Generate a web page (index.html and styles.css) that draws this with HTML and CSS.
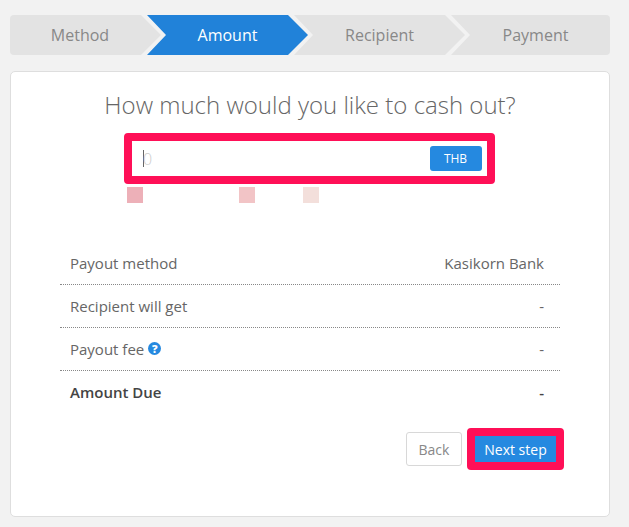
FILE: index.html
```html
<!DOCTYPE html>
<html lang="en">
<head>
<meta charset="utf-8">
<title>Cash out</title>
<link rel="stylesheet" href="styles.css">
</head>
<body>
<nav class="steps">
  <div class="step step-method">Method</div>
  <div class="step step-amount">Amount</div>
  <div class="step step-recipient">Recipient</div>
  <div class="step step-payment">Payment</div>
</nav>
<main class="card">
  <h1 class="title">How much would you like to cash out?</h1>
  <div class="amount-box">
    <span class="caret"></span><span class="placeholder">0</span>
    <span class="currency">THB</span>
  </div>
  <div class="hints">
    <span class="hint hint-a"></span>
    <span class="hint hint-b"></span>
    <span class="hint hint-c"></span>
  </div>
  <div class="rows">
    <div class="row"><span>Payout method</span><span>Kasikorn Bank</span></div>
    <div class="row"><span>Recipient will get</span><span>-</span></div>
    <div class="row"><span class="with-icon">Payout fee <span class="help">?</span></span><span>-</span></div>
    <div class="row row-total"><span>Amount Due</span><span>-</span></div>
  </div>
  <div class="actions">
    <button class="btn-back" type="button">Back</button>
    <span class="next-frame"><button class="btn-next" type="button">Next step</button></span>
  </div>
</main>
</body>
</html>
```
FILE: styles.css
```css
* { box-sizing: border-box; }
html, body { margin: 0; height: 100%; }
body {
  background: #f2f2f2;
  font-family: "Open Sans", sans-serif;
  color: #666;
  padding: 15px 19px 10px 10px;
  width: 629px;
  height: 527px;
  overflow: hidden;
}
.steps {
  display: flex;
  height: 40px;
  border-radius: 4px;
  overflow: hidden;
}
.step {
  display: flex;
  align-items: center;
  justify-content: center;
  flex: none;
  font-size: 16px;
  color: #888;
  background: #e3e3e3;
}
.step-method {
  width: 151px;
  padding-right: 11px;
  clip-path: polygon(0 0, 131px 0, 100% 50%, 131px 100%, 0 100%);
}
.step-amount {
  width: 161px;
  margin-left: -14px;
  color: #fff;
  background: #2182d9;
  clip-path: polygon(0 0, 141px 0, 100% 50%, 141px 100%, 0 100%, 19px 50%);
}
.step-recipient {
  width: 171px;
  margin-left: -14px;
  clip-path: polygon(0 0, 151px 0, 100% 50%, 151px 100%, 0 100%, 19px 50%);
}
.step-payment {
  width: 159px;
  margin-left: -14px;
  padding-left: 10px;
  clip-path: polygon(0 0, 100% 0, 100% 100%, 0 100%, 19px 50%);
}
.card {
  margin-top: 16px;
  height: 446px;
  background: #fff;
  border: 1px solid #dedede;
  border-radius: 5px;
  padding: 16px 49px 0;
}
.title {
  margin: 0;
  font-size: 24px;
  font-weight: 300;
  line-height: 33px;
  text-align: center;
  color: #666;
}
.amount-box {
  display: flex;
  align-items: center;
  width: 371px;
  height: 51px;
  margin: 12px 0 0 64px;
  border: 8px solid #ff0f57;
  border-radius: 4px;
  background: #fff;
  padding: 0 5px 0 11px;
}
.caret { width: 1px; height: 17px; background: #666; }
.placeholder { font-size: 16px; color: #ccc; margin-left: -1px; font-weight: 300; }
.currency {
  margin-left: auto;
  width: 52px;
  height: 25px;
  padding-right: 1px;
  background: #2589e0;
  color: #fff;
  font-size: 12px;
  border-radius: 3px;
  display: flex;
  align-items: center;
  justify-content: center;
}
.hints { display: flex; height: 16px; margin-top: 3px; padding-left: 67px; }
.hint { width: 16px; height: 16px; display: block; }
.hint-a { background: #edb0b8; }
.hint-b { background: #f2c4c6; margin-left: 96px; }
.hint-c { background: #f3dfdb; margin-left: 48px; }
.rows { margin-top: 39px; }
.row {
  display: flex;
  justify-content: space-between;
  align-items: center;
  height: 43px;
  padding: 0 16px 1px 10px;
  font-size: 15px;
  color: #666;
  border-bottom: 1px dotted #888;
}
.row-total { border-bottom-color: transparent; font-weight: 600; color: #444; }
.with-icon { display: inline-flex; align-items: center; gap: 4px; }
.help {
  width: 13px;
  height: 13px;
  border-radius: 50%;
  background: #2589e0;
  color: #fff;
  font-size: 11px;
  font-weight: 800;
  line-height: 13px;
  text-align: center;
}
.actions {
  display: flex;
  justify-content: flex-end;
  align-items: center;
  gap: 5px;
  margin-top: 14px;
  margin-right: -4px;
}
.btn-back {
  width: 56px;
  height: 34px;
  background: #fff;
  border: 1px solid #d8d8d8;
  border-radius: 3px;
  color: #888;
  font: 14px "Open Sans", sans-serif;
  padding: 0;
}
.next-frame {
  display: block;
  border: 8px solid #ff0f57;
  border-radius: 4px;
}
.btn-next {
  display: block;
  width: 81px;
  height: 26px;
  background: #2589e0;
  border: 0;
  color: #fff;
  font: 500 14px "Open Sans", sans-serif;
  padding: 0;
}
```
